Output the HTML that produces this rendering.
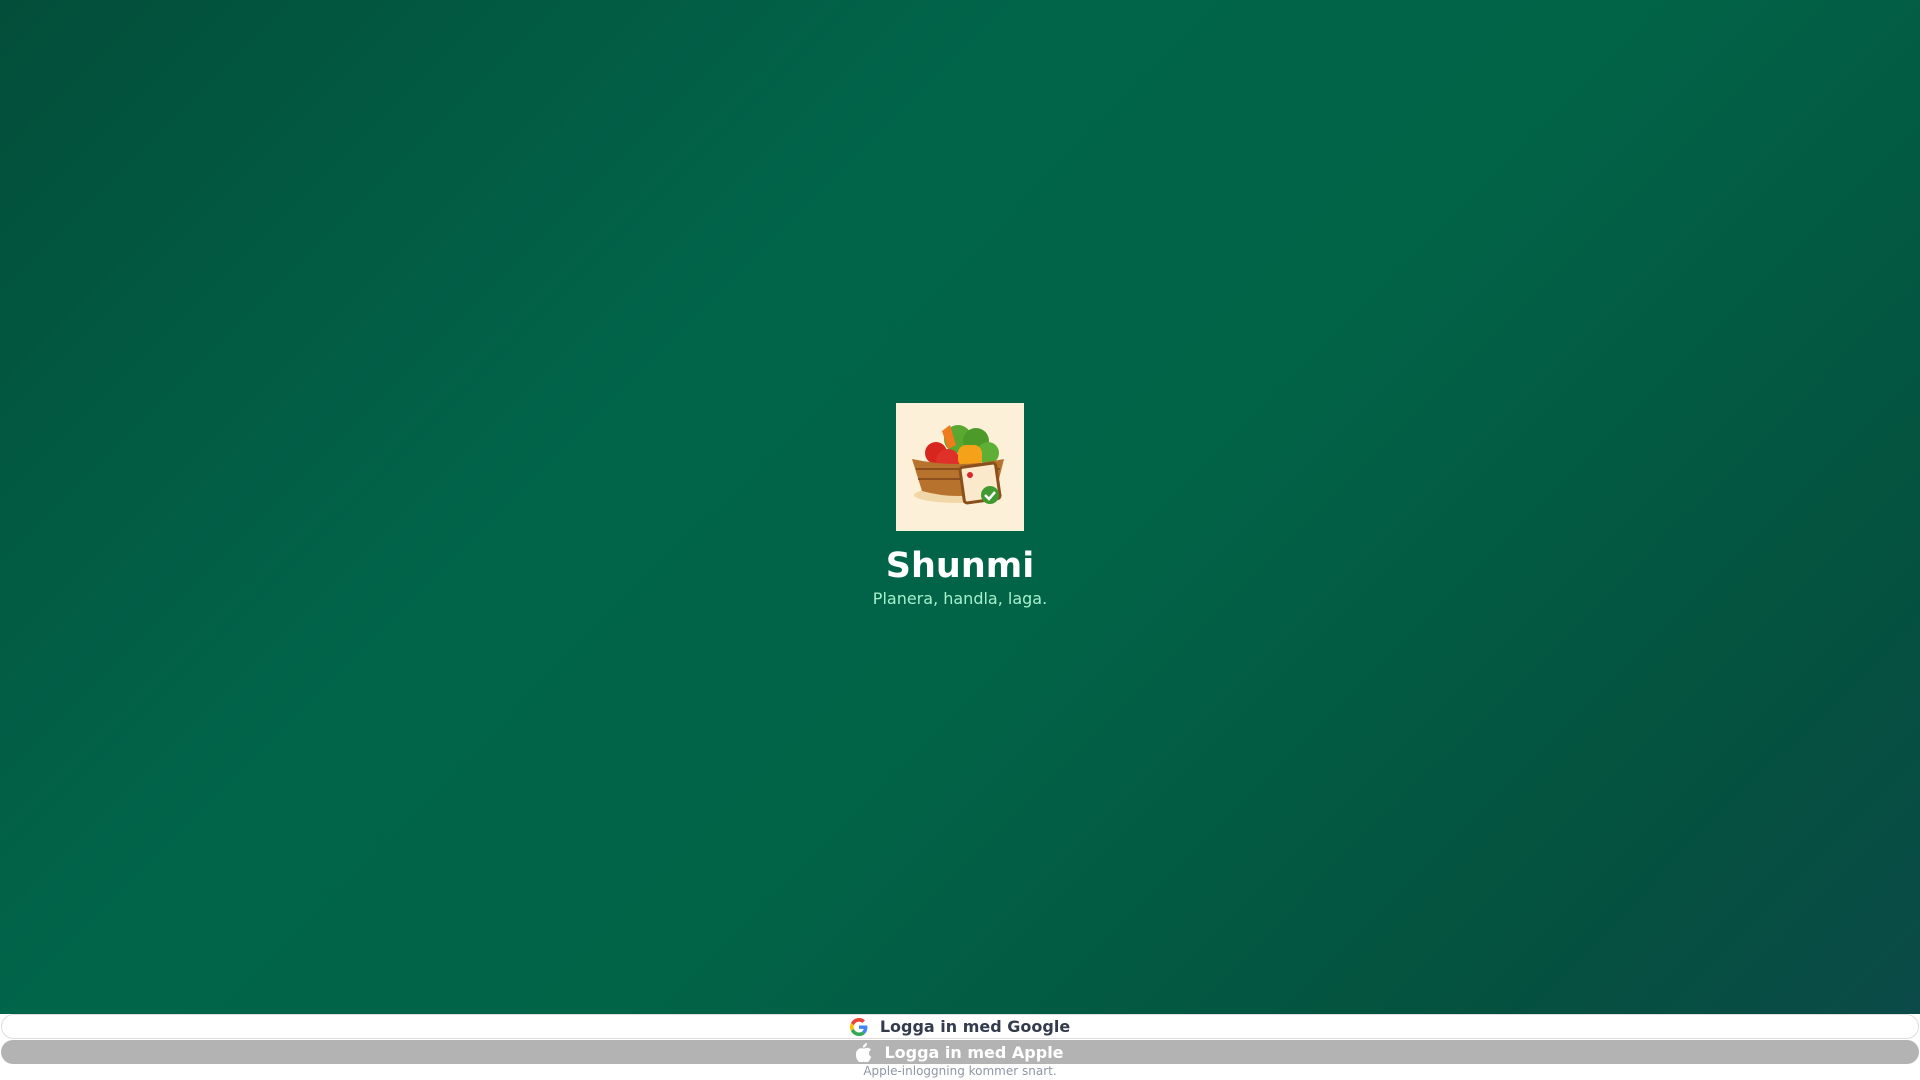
<!DOCTYPE html>
<html><head><meta charset="utf-8"><style>
*{margin:0;padding:0;box-sizing:border-box}
html,body{width:1920px;height:1080px;overflow:hidden;background:#fff;font-family:"DejaVu Sans","Liberation Sans",sans-serif}
.hero{position:absolute;left:0;top:0;width:1920px;height:1014px;background:linear-gradient(135deg,#034e3a 0%,#01654a 35%,#016447 55%,#04513f 85%,#0b4a48 100%)}
.logo{position:absolute;left:896px;top:403px;width:128px;height:128px;background:#fdf0d8}
.title{position:absolute;left:0;width:1920px;top:546px;text-align:center;color:#fff;font-weight:bold;font-size:35px;line-height:40px}
.sub{position:absolute;left:0;width:1920px;top:589px;text-align:center;color:#a7f0cc;font-size:16px}
.btn{position:absolute;left:1px;width:1918px;border-radius:13px;display:flex;align-items:center;justify-content:center;font-weight:bold;font-size:16px}
.g{top:1014px;height:25px;background:#fff;border:1px solid #ddd;color:#333b4d}
.a{top:1040px;height:24px;background:#b3b3b3;color:#fff}
.note{position:absolute;top:1064px;left:0;width:1920px;text-align:center;font-size:12px;color:#8e96a6}
</style></head><body>
<div class="hero">
<div class="logo"><svg width="128" height="128" viewBox="0 0 128 128">
<ellipse cx="62" cy="92" rx="44" ry="8" fill="#f1d6a8"/>
<circle cx="62" cy="36" r="14" fill="#5aa830"/><circle cx="80" cy="38" r="13" fill="#4c9a2a"/><circle cx="92" cy="50" r="11" fill="#5fae35"/>
<path d="M46 28 l8 -6 l6 20 l-8 4z" fill="#f07a1e"/>
<circle cx="40" cy="50" r="11" fill="#d7261e"/><circle cx="52" cy="58" r="12" fill="#e0302a"/>
<rect x="62" y="42" width="24" height="22" rx="8" fill="#f5a21a"/>
<path d="M16 56 Q62 66 108 56 L100 88 Q62 98 26 88z" fill="#b7732d"/>
<path d="M20 66 H104 M22 76 H102" stroke="#8a4f1c" stroke-width="2"/>
<rect x="66" y="62" width="36" height="36" rx="3" fill="#fbe9cc" stroke="#8a4f1c" stroke-width="3" transform="rotate(-8 84 80)"/>
<circle cx="74" cy="72" r="3" fill="#d8262c"/>
<circle cx="94" cy="92" r="9" fill="#3f9a2f"/><path d="M89 92 l4 4 l6 -7" stroke="#fff" stroke-width="2.5" fill="none"/>
</svg></div>
<div class="title">Shunmi</div>
<div class="sub">Planera, handla, laga.</div>
</div>
<div class="btn g"><svg width="18" height="18" viewBox="0 0 48 48" style="margin-right:12px"><path fill="#EA4335" d="M24 9.5c3.5 0 6.6 1.2 9.1 3.6l6.8-6.8C35.8 2.4 30.3 0 24 0 14.6 0 6.6 5.4 2.6 13.2l7.9 6.2C12.4 13.7 17.7 9.5 24 9.5z"/><path fill="#4285F4" d="M46.5 24.5c0-1.6-.1-3.1-.4-4.5H24v9h12.6c-.5 2.9-2.2 5.4-4.7 7.1l7.6 5.9c4.4-4.1 7-10.1 7-17.5z"/><path fill="#FBBC05" d="M10.5 28.6c-.5-1.4-.8-3-.8-4.6s.3-3.2.8-4.6l-7.9-6.2C.9 16.5 0 20.1 0 24s.9 7.5 2.6 10.8l7.9-6.2z"/><path fill="#34A853" d="M24 48c6.5 0 11.9-2.1 15.9-5.8l-7.6-5.900c-2.1 1.4-4.9 2.3-8.300 2.3-6.3 0-11.6-4.2-13.5-10l-7.9 6.2C6.6 42.6 14.6 48 24 48z"/></svg>Logga in med Google</div>
<div class="btn a"><svg width="16" height="19" viewBox="0 0 16 19" style="margin-right:12px"><path d="M11 0c.1 1.2-.4 2.4-1.1 3.2-.8.9-1.9 1.5-3 1.4-.1-1.2.4-2.3 1.1-3.1C8.8.7 10 .1 11 0z" fill="#fff"/><path d="M8 5.5c1.2 0 2.2-.7 3.5-.7 1.1 0 2.6.6 3.5 1.9-3 1.7-2.6 6 .3 7.1-.5 1.3-1 2.2-1.8 3.3-.9 1.3-1.8 2.4-3.1 2.4-1.2 0-1.5-.7-2.9-.7s-1.800.7-3 .7C3.2 19.5 2.3 18.4 1.5 17-.6 13.7-.6 9.4 1.3 7.2 2.2 6 3.6 5.300 4.8 5.3c1.3 0 2.1.2 3.2.2z" fill="#fff"/></svg>Logga in med Apple</div>
<div class="note">Apple-inloggning kommer snart.</div>
</body></html>
